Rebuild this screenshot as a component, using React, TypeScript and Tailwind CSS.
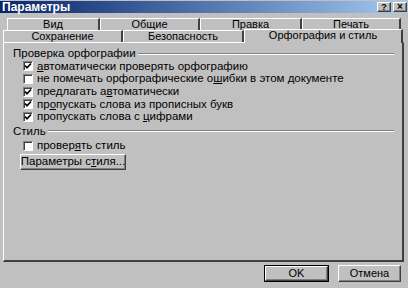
import type { ReactNode } from 'react';

const raised =
  'border border-t-white border-l-white border-r-[#404040] border-b-[#404040] shadow-[inset_-1px_-1px_0_#808080]';

function CheckBox({ checked }: { checked: boolean }) {
  return (
    <span className="w-[10px] h-[10px] bg-white border border-t-[#808080] border-l-[#808080] border-r-white border-b-white shadow-[inset_1px_1px_0_#404040] flex items-center justify-center shrink-0">
      {checked && (
        <svg width="8" height="8" viewBox="0 0 8 8">
          <polyline points="1,3.5 3,5.8 7,1.5" fill="none" stroke="#000" strokeWidth="1.7" />
        </svg>
      )}
    </span>
  );
}

function CheckRow({ checked, children }: { checked: boolean; children: ReactNode }) {
  return (
    <div className="h-[12.7px] flex items-center gap-[4px] pl-[19px]">
      <CheckBox checked={checked} />
      <span className="leading-none whitespace-nowrap">{children}</span>
    </div>
  );
}

function GroupTitle({ title }: { title: string }) {
  return (
    <div className="flex items-center gap-[2px] h-[12px] pl-[9px] pr-[8px]">
      <span className="leading-none">{title}</span>
      <div className="flex-1 h-[2px] border-t border-t-[#808080] border-b border-b-white" />
    </div>
  );
}

function Tab({ label, className }: { label: string; className: string }) {
  return (
    <div
      className={`h-full flex items-center justify-center border-t border-l border-t-white border-l-white border-r-2 border-r-[#404040] ${className}`}
    >
      <span className="leading-none whitespace-nowrap">{label}</span>
    </div>
  );
}

export default function App() {
  return (
    <div className="w-[408px] h-[288px] bg-[#c0c0c0] flex flex-col overflow-hidden text-black text-[11px] font-['Liberation_Sans',Arial,sans-serif]">
      {/* Title bar */}
      <div className="h-[12px] mt-[1px] bg-gradient-to-r from-[#0a246a] to-[#a6caf0] flex items-center justify-between pl-[2px] pr-[1px]">
        <span className="text-white text-[12px] font-bold leading-none">Параметры</span>
        <div className="flex gap-[2px]">
          <div className={`w-[14px] h-[10px] bg-[#c0c0c0] flex items-center justify-center ${raised}`}>
            <span className="text-[9px] font-bold leading-none">?</span>
          </div>
          <div className={`w-[14px] h-[10px] bg-[#c0c0c0] flex items-center justify-center ${raised}`}>
            <span className="text-[10px] font-bold leading-none">×</span>
          </div>
        </div>
      </div>

      {/* Tabs */}
      <div className="mt-[5px] ml-[7px] w-[394px] h-[12px] flex">
        <Tab label="Вид" className="w-[93px]" />
        <Tab label="Общие" className="w-[100px]" />
        <Tab label="Правка" className="w-[102px]" />
        <Tab label="Печать" className="w-[99px]" />
      </div>
      <div className="ml-[3px] h-[12px] flex items-end">
        <Tab label="Сохранение" className="w-[120px]" />
        <Tab label="Безопасность" className="w-[121px]" />
        <div className="relative z-10 w-[159px] h-[14px] -mb-[1px] bg-[#c0c0c0] flex items-center justify-center border-t border-l border-t-white border-l-white border-r-2 border-r-[#404040]">
          <span className="leading-none mt-[-3px] whitespace-nowrap">Орфография и стиль</span>
        </div>
      </div>

      {/* Panel */}
      <div className="ml-[3px] w-[401px] h-[220px] text-[11.5px] border-t border-l border-t-white border-l-white border-r-2 border-b-2 border-r-[#404040] border-b-[#404040] pt-[5px]">
        <GroupTitle title="Проверка орфографии" />
        <div>
          <CheckRow checked>
            <u>а</u>втоматически проверять орфографию
          </CheckRow>
          <CheckRow checked={false}>
            не помечать орфографические о<u>ш</u>ибки в этом документе
          </CheckRow>
          <CheckRow checked>
            предлагать а<u>в</u>томатически
          </CheckRow>
          <CheckRow checked>
            пр<u>о</u>пускать слова из прописных букв
          </CheckRow>
          <CheckRow checked>
            пропускать слова с <u>ц</u>ифрами
          </CheckRow>
        </div>
        <div className="mt-[2px]">
          <GroupTitle title="Стиль" />
        </div>
        <div className="mt-[2px]">
          <CheckRow checked={false}>
            провер<u>я</u>ть стиль
          </CheckRow>
        </div>
        <div className="mt-[2px] ml-[16px]">
          <button className={`w-[106px] h-[16px] bg-[#c0c0c0] flex items-center justify-center ${raised}`}>
            <span className="leading-none whitespace-nowrap">
              Параметры с<u>т</u>иля...
            </span>
          </button>
        </div>
      </div>

      {/* Footer buttons */}
      <div className="flex justify-end gap-[9px] pr-[7px] mt-[3px]">
        <button className="w-[65px] h-[17px] bg-[#c0c0c0] border border-black flex items-center justify-center">
          <span className={`w-full h-full flex items-center justify-center ${raised}`}>
            <span className="leading-none">OK</span>
          </span>
        </button>
        <button className={`w-[63px] h-[17px] bg-[#c0c0c0] flex items-center justify-center ${raised}`}>
          <span className="leading-none">Отмена</span>
        </button>
      </div>
    </div>
  );
}
